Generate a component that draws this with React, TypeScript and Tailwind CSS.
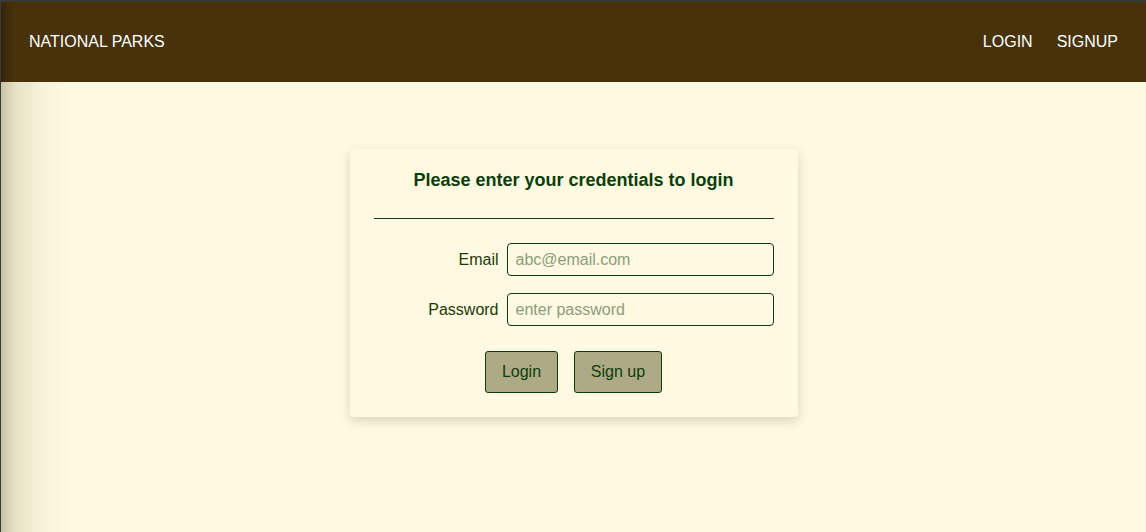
const font = { fontFamily: '"Liberation Sans", Arial, sans-serif' };

const Field = ({ label, type, placeholder }: { label: string; type: string; placeholder: string }) => (
  <div className="flex items-center gap-2">
    <label className="w-[125px] text-right text-[16px] text-[#1c3a0a]">{label}</label>
    <input
      type={type}
      placeholder={placeholder}
      className="w-[267px] h-[33px] px-2 rounded-[4px] border border-[#0b3d0b] bg-transparent text-[16px] text-[#0b3d0b] outline-none placeholder:text-[#8c9c7c]"
    />
  </div>
);

export default function App() {
  return (
    <div
      className="min-h-screen h-[532px] flex flex-col bg-[#fef9e0] border-t-2 border-l border-[#3a3a3a]"
      style={font}
    >
      <header className="h-[80px] shrink-0 flex items-center justify-between pl-[28px] pr-[28px] bg-[#47320a] bg-[linear-gradient(to_right,rgba(0,0,0,0.25),rgba(0,0,0,0)_12px)] text-white text-[16px]">
        <span>NATIONAL PARKS</span>
        <nav className="flex items-center gap-[24px]">
          <a>LOGIN</a>
          <a>SIGNUP</a>
        </nav>
      </header>

      <main className="flex-1 flex justify-center pt-[67px] bg-[linear-gradient(to_right,rgba(60,50,20,0.28),rgba(60,50,20,0.12)_14px,rgba(60,50,20,0.04)_40px,rgba(60,50,20,0)_70px)]">
        <div className="w-[448px] h-fit px-6 pt-[18px] pb-6 rounded-[4px] bg-[#fef9e0] shadow-[0_4px_12px_rgba(0,0,0,0.15)]">
          <h1 className="text-center text-[18px] leading-[27px] font-bold text-[#0b3d0b]">
            Please enter your credentials to login
          </h1>
          <hr className="mt-[24px] border-0 border-t border-[#0b3d0b]" />
          <div className="mt-[24px] flex flex-col gap-[17px]">
            <Field label="Email" type="email" placeholder="abc@email.com" />
            <Field label="Password" type="password" placeholder="enter password" />
          </div>
          <div className="mt-[25px] flex justify-center gap-4">
            <button className="w-[73px] h-[42px] rounded-[3px] border border-[#0b3d0b] bg-[#afaa86] text-[16px] text-[#0b3d0b]">
              Login
            </button>
            <button className="w-[88px] h-[42px] rounded-[3px] border border-[#0b3d0b] bg-[#afaa86] text-[16px] text-[#0b3d0b]">
              Sign up
            </button>
          </div>
        </div>
      </main>
    </div>
  );
}
